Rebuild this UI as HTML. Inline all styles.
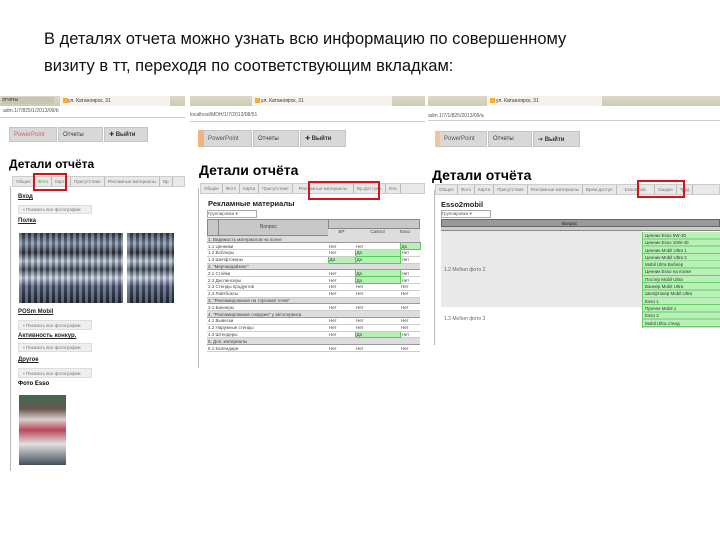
<!DOCTYPE html>
<html><head><meta charset="utf-8"><style>
*{margin:0;padding:0;box-sizing:border-box}
body{width:720px;height:540px;background:#fff;position:relative;overflow:hidden;font-family:"Liberation Sans","DejaVu Sans",sans-serif;color:#000}
.a{position:absolute}
.t{font-size:5px;color:#555;white-space:nowrap;overflow:hidden}
.tabbar{background:linear-gradient(#ddd9c8,#cfcab4);}
.btn{background:#d8d8d8;border:1px solid #c4c4c4;font-size:6px;color:#333;display:flex;align-items:center;padding-left:4px}
.tabs{background:#e8e8e8;border:1px solid #ccc;display:flex;font-size:4.5px;color:#777;overflow:hidden;white-space:nowrap}
.tabs span{border-right:1px solid #bbb;padding:0 3px;display:flex;align-items:center}
.red{border:2px solid #d4141c}
.h{font-weight:bold;font-size:6px;text-decoration:underline;color:#222}
.sb{background:#eee;border:1px solid #ddd;font-size:4.5px;color:#777;padding-left:4px;display:flex;align-items:center}
.photo{background:repeating-linear-gradient(90deg,rgba(255,255,255,.25) 0 3px,rgba(0,0,0,.2) 3px 6px),linear-gradient(180deg,#2a3442 0%,#7f90a8 15%,#2b3340 28%,#b9c4d6 40%,#3b4658 52%,#c9d0e0 64%,#4b5a78 76%,#222838 100%)}
table{border-collapse:collapse;font-size:4.5px;color:#444}
td{border-bottom:1px solid #ccc;height:6.8px;padding:0 1px;white-space:nowrap;overflow:hidden}
.sec td{background:#ddd;border-bottom:1px solid #999}
.g{background:#b6f0b6;border:1px solid #5c5}
</style></head><body>

<div class="a" style="left:44px;top:26px;font-size:16.5px;line-height:27px;color:#111">В деталях отчета можно узнать всю информацию по совершенному<br>визиту в тт, переходя по соответствующим вкладкам:</div>

<!-- Panel 1 -->
<div class="a tabbar" style="left:0;top:96px;width:185px;height:10px"></div>
<div class="a" style="left:2px;top:97px;width:52px;height:7px;background:#c9c5b2;font-size:5px;color:#333">отчеты</div>
<div class="a" style="left:60px;top:96px;width:110px;height:10px;background:#f4f2ea;font-size:5px;color:#333;padding:2px 0 0 8px">ул. Катаноярск, 31</div>
<div class="a" style="left:63px;top:98px;width:5px;height:5px;background:#f0b030"></div>
<div class="a t" style="left:3px;top:108px">adm.1/7/825/1/2013/09/b</div>
<div class="a" style="left:0;top:117px;width:185px;height:1px;background:#ccc"></div>
<div class="a btn" style="left:9px;top:127px;width:48px;height:15px;color:#c66">PowerPoint</div>
<div class="a btn" style="left:58px;top:127px;width:45px;height:15px">Отчеты</div>
<div class="a btn" style="left:104px;top:127px;width:44px;height:15px;font-weight:bold">✚ Выйти</div>
<div class="a" style="left:9px;top:157px;font-size:12px;font-weight:bold">Детали отчёта</div>
<div class="a tabs" style="left:12px;top:176px;width:173px;height:11px"><span>Общее</span><span style="color:#4a4">Фото</span><span>Карта</span><span>Присутствие</span><span>Рекламные материалы</span><span>Вр</span></div>
<div class="a red" style="left:33px;top:173px;width:34px;height:18px"></div>
<div class="a" style="left:10px;top:186px;width:1px;height:285px;background:#bbb"></div>
<div class="a h" style="left:18px;top:194px">Вход</div>
<div class="a sb" style="left:18px;top:205px;width:74px;height:9px">▪ Показать все фотографии</div>
<div class="a h" style="left:18px;top:218px">Полка</div>
<div class="a photo" style="left:19px;top:233px;width:104px;height:70px"></div>
<div class="a photo" style="left:127px;top:233px;width:47px;height:70px"></div>
<div class="a h" style="left:18px;top:309px">POSm Mobil</div>
<div class="a sb" style="left:18px;top:320px;width:74px;height:10px">▪ Показать все фотографии</div>
<div class="a h" style="left:18px;top:333px">Активность конкур.</div>
<div class="a sb" style="left:18px;top:343px;width:74px;height:9px">▪ Показать все фотографии</div>
<div class="a h" style="left:18px;top:357px">Другое</div>
<div class="a sb" style="left:18px;top:368px;width:74px;height:10px">▪ Показать все фотографии</div>
<div class="a" style="left:18px;top:381px;font-weight:bold;font-size:6px">Фото Esso</div>
<div class="a" style="left:19px;top:395px;width:47px;height:70px;background:linear-gradient(180deg,#3d6a50 0%,#6b5850 20%,#d8d0d0 35%,#b8485a 50%,#e0e0e0 70%,#44505a 100%)"></div>

<!-- Panel 2 -->
<div class="a tabbar" style="left:190px;top:96px;width:235px;height:10px"></div>
<div class="a" style="left:252px;top:96px;width:140px;height:10px;background:#f4f2ea;font-size:5px;color:#333;padding:2px 0 0 9px">ул. Катаноярск, 31</div>
<div class="a" style="left:255px;top:98px;width:5px;height:5px;background:#f0b030"></div>
<div class="a t" style="left:190px;top:112px">localhost/MDH/1/7/2013/08/51</div>
<div class="a" style="left:190px;top:121px;width:235px;height:1px;background:#ccc"></div>
<div class="a btn" style="left:198px;top:130px;width:54px;height:17px;color:#555;border-left:6px solid #f2b27a">PowerPoint</div>
<div class="a btn" style="left:253px;top:130px;width:46px;height:17px">Отчеты</div>
<div class="a btn" style="left:300px;top:130px;width:46px;height:17px;font-weight:bold">✚ Выйти</div>
<div class="a" style="left:199px;top:162px;font-size:14px;font-weight:bold">Детали отчёта</div>
<div class="a tabs" style="left:200px;top:183px;width:225px;height:11px"><span>Общее</span><span>Фото</span><span>Карта</span><span>Присутствие</span><span style="padding:0 6px">Рекламные материалы</span><span>Вр.Доступн.</span><span>Ess</span></div>
<div class="a red" style="left:308px;top:181px;width:72px;height:19px"></div>
<div class="a" style="left:198px;top:188px;width:1px;height:180px;background:#bbb"></div>
<div class="a" style="left:208px;top:199px;font-size:7.5px;font-weight:bold;color:#222">Рекламные материалы</div>
<div class="a" style="left:207px;top:210px;width:50px;height:8px;border:1px solid #aaa;font-size:4.5px;color:#555;background:#fff">Группировка ▾</div>
<div class="a" style="left:207px;top:219px;width:213px;height:17px;background:#c8c8c8;border:1px solid #888"></div>
<div class="a" style="left:218px;top:219px;width:1px;height:17px;background:#888"></div>
<div class="a" style="left:328px;top:219px;width:1px;height:17px;background:#888"></div>
<div class="a" style="left:328px;top:228px;width:92px;height:8px;background:#ddd;border-top:1px solid #888;font-size:4.5px;display:flex;color:#444"><span style="width:27px;text-align:center">BP</span><span style="width:45px;text-align:center">Castrol</span><span>Esso</span></div>
<div class="a" style="left:260px;top:224px;font-size:5px;color:#444">Вопрос</div>
<table class="a" style="left:207px;top:236px;width:213px;table-layout:fixed">
<colgroup><col style="width:121px"><col style="width:27px"><col style="width:45px"><col style="width:20px"></colgroup>
<tr class="sec"><td colspan="4">1. Видимость материалов на полке</td></tr>
<tr><td>1.1 Ценники</td><td>Нет</td><td>Нет</td><td class="g">Да</td></tr>
<tr><td>1.2 Воблеры</td><td>Нет</td><td class="g">Да</td><td>Нет</td></tr>
<tr><td>1.3 Шелфтокеры</td><td class="g">Да</td><td class="g">Да</td><td>Нет</td></tr>
<tr class="sec"><td colspan="4">2. "Мерчандайзинг"</td></tr>
<tr><td>2.1 Стойки</td><td>Нет</td><td class="g">Да</td><td>Нет</td></tr>
<tr><td>2.2 Диспенсеры</td><td>Нет</td><td class="g">Да</td><td>Нет</td></tr>
<tr><td>2.3 Стенды продуктов</td><td>Нет</td><td>Нет</td><td>Нет</td></tr>
<tr><td>2.4 Лайтбоксы</td><td>Нет</td><td>Нет</td><td>Нет</td></tr>
<tr class="sec"><td colspan="4">3. "Рекламирование на торговой точке"</td></tr>
<tr><td>3.1 Баннеры</td><td>Нет</td><td>Нет</td><td>Нет</td></tr>
<tr class="sec"><td colspan="4">4. "Рекламирование снаружи" у автосервиса</td></tr>
<tr><td>4.1 Вывески</td><td>Нет</td><td>Нет</td><td>Нет</td></tr>
<tr><td>4.2 Наружные стенды</td><td>Нет</td><td>Нет</td><td>Нет</td></tr>
<tr><td>4.3 Штендеры</td><td>Нет</td><td class="g">Да</td><td>Нет</td></tr>
<tr class="sec"><td colspan="4">5. Доп. материалы</td></tr>
<tr><td>5.1 Календари</td><td>Нет</td><td>Нет</td><td>Нет</td></tr>
</table>

<!-- Panel 3 -->
<div class="a tabbar" style="left:428px;top:96px;width:292px;height:10px"></div>
<div class="a" style="left:487px;top:96px;width:115px;height:10px;background:#f4f2ea;font-size:5px;color:#333;padding:2px 0 0 9px">ул. Катаноярск, 31</div>
<div class="a" style="left:490px;top:98px;width:5px;height:5px;background:#f0b030"></div>
<div class="a t" style="left:428px;top:113px">adm.1/7/1/825/2013/09/a</div>
<div class="a" style="left:428px;top:120px;width:292px;height:1px;background:#ccc"></div>
<div class="a btn" style="left:435px;top:131px;width:52px;height:16px;color:#555;border-left:5px solid #f2c49a">PowerPoint</div>
<div class="a btn" style="left:488px;top:131px;width:44px;height:16px">Отчеты</div>
<div class="a btn" style="left:533px;top:131px;width:47px;height:16px;font-weight:bold">➔ Выйти</div>
<div class="a" style="left:432px;top:167px;font-size:14px;font-weight:bold">Детали отчёта</div>
<div class="a tabs" style="left:435px;top:184px;width:285px;height:11px"><span>Общее</span><span>Фото</span><span>Карта</span><span>Присутствие</span><span>Рекламные материалы</span><span>Врем.доступ</span><span style="padding:0 8px">Esso2mob</span><span>Скидки</span><span>Труд</span></div>
<div class="a red" style="left:637px;top:180px;width:48px;height:18px"></div>
<div class="a" style="left:434px;top:190px;width:1px;height:155px;background:#bbb"></div>
<div class="a" style="left:441px;top:200px;font-size:7.5px;font-weight:bold;color:#222">Esso2mobil</div>
<div class="a" style="left:441px;top:210px;width:50px;height:8px;border:1px solid #aaa;font-size:4.5px;color:#555;background:#fff">Группировка ▾</div>
<div class="a" style="left:441px;top:219px;width:279px;height:8px;background:#999;border:1px solid #666;font-size:4.5px;color:#222"><span style="position:absolute;left:120px;top:1px">Вопрос</span></div>
<div class="a" style="left:441px;top:227px;width:279px;height:4px;background:#ccc;border-bottom:1px solid #888"></div>
<div class="a" style="left:441px;top:231px;width:201px;height:76px;background:#e9e9e9"></div>
<div class="a t" style="left:444px;top:267px;color:#666">1.2 Мобил фото 2</div>
<div class="a t" style="left:444px;top:316px;color:#666">1.3 Мобил фото 3</div>
<div class="a" style="left:642px;top:232px;width:78px;height:96px;background:#b8f0b8;border-left:1px solid #6c6;background-image:repeating-linear-gradient(180deg,transparent 0,transparent 6.4px,#6c6 6.4px,#6c6 7.3px);font-size:4.5px;color:#333;line-height:7.3px;padding-left:2px;white-space:nowrap;overflow:hidden">Ценник Esso 5W-30<br>Ценник Esso 10W-40<br>Ценник Mobil Ultra 1<br>Ценник Mobil Ultra 2<br>Mobil Ultra Воблер<br>Ценник Esso на полке<br>Постер Mobil Ultra<br>Баннер Mobil Ultra<br>Шелфтокер Mobil Ultra<br>Esso 1<br>Прочее Mobil 1<br>Esso 2<br>Mobil Ultra стенд</div>
</body></html>
